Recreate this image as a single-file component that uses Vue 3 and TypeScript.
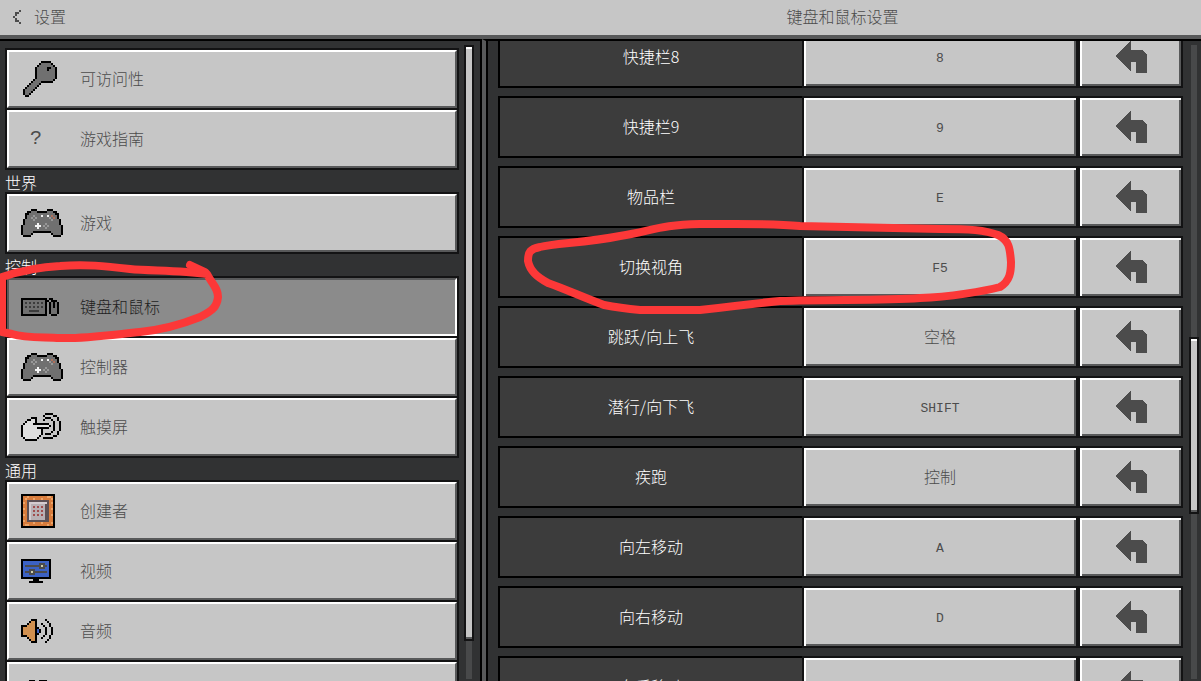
<script setup lang="ts">
import { ref } from 'vue'

interface Entry {
  id: string
  label: string
  icon: string
}
interface Group {
  title: string
  entries: Entry[]
}
interface Binding {
  action: string
  key: string
}

const palette: Record<string, string> = {
  K: '#000000',
  g: '#707070',
  s: '#989898',
  w: '#f4f4f4',
  o: '#b0705c',
  d: '#3c3c3c',
  h: '#dedede',
  c: '#d87c3c',
  l: '#eca468',
  e: '#5c5054',
  p: '#b8b0b4',
  q: '#d4ccd0',
  r: '#a04c4c',
  u: '#3c62c4',
  n: '#4c4c4c',
  y: '#d0d0b0',
  b: '#d09050',
}

const icons: Record<string, string[]> = {
  key: [
    '..........KKKKK...',
    '.........KgggggK..',
    '........KgggggggK.',
    '.......KgggggKKggK',
    '.......KgggggKgggK',
    '.......KgggggggggK',
    '.......KgggggggggK',
    '.......KgggggggggK',
    '.......KgggggggggK',
    '......KgggggggggK.',
    '.....KggggKKKKKK..',
    '....KggggK........',
    '...KggggK.........',
    '..KggggK..........',
    '.KggggK...........',
    '.KgggK............',
    '.KggK.............',
    '..KK..............',
  ],
  gamepad: [
    '.....KKK.....KKK.....',
    '...KKgggKKKKKgggKK...',
    '..KKgggggggggggggKK..',
    '..KgggsgggwggwgoggK..',
    '..KggsgsggggggsgogK..',
    '.KggggsggggggggsgggK.',
    '.KgggggggggggggggggK.',
    '.KggggggwgggsggggggK.',
    'KggggggwwwgsgsggggggK',
    'KgggggggwgggsgggggggK',
    'KgggggggggggggggggggK',
    'KgggggKKKKKKKKKgggggK',
    'KggggK.........KggggK',
    '.KKKK...........KKKK.',
  ],
  keyboard: [
    'KKKKKKKKKKKKK.KK...',
    'KgggggggggggKK.KKK.',
    'KgdgdgdgdgdgK.KgKgK',
    'KgggggggggggK.KgKgK',
    'KgdgdgdgdgdgK.KgKgK',
    'KgggggggggggK.KgggK',
    'KgggdddddgggK.KgggK',
    'KgggggggggggK.KgggK',
    'KKKKKKKKKKKKK..KKK.',
  ],
  touch: [
    '............KKKK....',
    '...........K....KK..',
    '.....KKK....KKK...K.',
    '...KKhhK...K...K..K.',
    '..KhhhhK........K..K',
    '.KhhhhKKKKKKKK..K..K',
    'KhhhhhhhhhhhhhK.K..K',
    'KhhhhhhhKKKKKK..K..K',
    'KhhhhhhhhhK.....K..K',
    'KhhhhhhhhhK....K..K.',
    'KhhhhhhhhhK.KKK...K.',
    'KhhhhhhhhK......KK..',
    '.KhhhhhhK..KKKKK....',
    '..KKKKKK............',
  ],
  creator: [
    'KKKKKKKKKKKKKKKKK',
    'KcclcccccccccllcK',
    'KclccclccclcccclK',
    'KcceeeeeeeeeeeccK',
    'KlceqqqqqqqqqeclK',
    'KcceqpppppppeeccK',
    'KcceqprprprpeeccK',
    'KlceqpppppppeeclK',
    'KcceqprprprpeeccK',
    'KcceqpppppppeeccK',
    'KlceqprprprpeeclK',
    'KcceqpppppppeeccK',
    'KcceqpppppppeeccK',
    'KlceeeeeeeeeeeccK',
    'KccccclccclcccclK',
    'KcllccccccccclccK',
    'KKKKKKKKKKKKKKKKK',
  ],
  video: [
    'KKKKKKKKKKKKKKK',
    'KuuuuuuuuuuuuuK',
    'KuuuuuuuunnnuuK',
    'KunnnnnnnnynnuK',
    'KuuuuuuuunnnuuK',
    'KuuunnnuuuuuuuK',
    'KunnnynnnnnnnuK',
    'KuuunnnuuuuuuuK',
    'KuuuuuuuuuuuuuK',
    'KKKKKKKKKKKKKKK',
    '......KKK......',
    '....KKKKKKK....',
  ],
  audio: [
    '.....KKK....K...',
    '....KbbK.....K..',
    '...KbbbK..K...K.',
    'KKKbbbbK...K..K.',
    'KbbbbbbKK...K..K',
    'KbbbbbbKuK..K..K',
    'KbbbbbbKuK..K..K',
    'KbbbbbbKK...K..K',
    'KKKbbbbK...K..K.',
    '...KbbbK..K...K.',
    '....KbbK.....K..',
    '.....KKK....K...',
  ],
  language: [
    '....KKK..KKKK...',
    '...KhhhKKhhhhK..',
    '..KhhhhhhhhhhK..',
    '.KhhhhhhhhhhhhK.',
    '.KhhhhhhhhhhhhK.',
    '.KhhhhhhhhhhhhK.',
    '.KhhhhhhhhhhhhK.',
    '.KhhhhhhhhhhhhK.',
    '..KhhhhhhhhhhK..',
    '...KKKKKKKKKK...',
    '................',
  ],
  back: ['...n', '.nn.', '.n..', 'n...', '.n..', '.nn.', '...n'],
}

interface Pixel {
  x: number
  y: number
  w: number
  fill: string
}

function pixels(name: string): Pixel[] {
  const out: Pixel[] = []
  icons[name].forEach((row, y) => {
    let x = 0
    while (x < row.length) {
      let w = 1
      while (row[x + w] === row[x]) w++
      if (row[x] !== '.') out.push({ x, y, w, fill: palette[row[x]] })
      x += w
    }
  })
  return out
}
const cols = (name: string) => Math.max(...icons[name].map((r) => r.length))
const rows = (name: string) => icons[name].length
const isLatin = (text: string) => /^[\x20-\x7e]+$/.test(text)

const groups: Group[] = [
  {
    title: '',
    entries: [
      { id: 'access', label: '可访问性', icon: 'key' },
      { id: 'guide', label: '游戏指南', icon: '' },
    ],
  },
  { title: '世界', entries: [{ id: 'game', label: '游戏', icon: 'gamepad' }] },
  {
    title: '控制',
    entries: [
      { id: 'keyboard', label: '键盘和鼠标', icon: 'keyboard' },
      { id: 'controller', label: '控制器', icon: 'gamepad' },
      { id: 'touch', label: '触摸屏', icon: 'touch' },
    ],
  },
  {
    title: '通用',
    entries: [
      { id: 'creator', label: '创建者', icon: 'creator' },
      { id: 'video', label: '视频', icon: 'video' },
      { id: 'audio', label: '音频', icon: 'audio' },
      { id: 'more', label: '', icon: 'language' },
    ],
  },
]

const bindings: Binding[] = [
  { action: '快捷栏8', key: '8' },
  { action: '快捷栏9', key: '9' },
  { action: '物品栏', key: 'E' },
  { action: '切换视角', key: 'F5' },
  { action: '跳跃/向上飞', key: '空格' },
  { action: '潜行/向下飞', key: 'SHIFT' },
  { action: '疾跑', key: '控制' },
  { action: '向左移动', key: 'A' },
  { action: '向右移动', key: 'D' },
  { action: '向后移动', key: '' },
]

const selected = ref('keyboard')
</script>

<template>
  <div class="screen">
    <header class="topbar">
      <button class="back" type="button">
        <svg class="px" :width="cols('back') * 2" :height="rows('back') * 2" :viewBox="`0 0 ${cols('back')} ${rows('back')}`" aria-hidden="true">
          <rect v-for="(p, i) in pixels('back')" :key="i" :x="p.x" :y="p.y" :width="p.w" height="1" :fill="p.fill" />
        </svg>
        <span class="text">设置</span>
      </button>
      <h1 class="title text">键盘和鼠标设置</h1>
    </header>

    <div class="panels">
      <div class="side">
        <nav class="menu">
          <section v-for="g in groups" :key="g.title" class="group">
            <h2 v-if="g.title" class="group-title">{{ g.title }}</h2>
            <div class="stack">
              <button
                v-for="e in g.entries"
                :key="e.id"
                type="button"
                class="entry"
                :class="{ active: selected === e.id }"
                @click="selected = e.id"
              >
                <span class="slot">
                  <svg v-if="e.icon" class="px" :width="cols(e.icon) * 2" :height="rows(e.icon) * 2" :viewBox="`0 0 ${cols(e.icon)} ${rows(e.icon)}`" aria-hidden="true">
                    <rect v-for="(p, i) in pixels(e.icon)" :key="i" :x="p.x" :y="p.y" :width="p.w" height="1" :fill="p.fill" />
                  </svg>
                  <span v-else class="question">?</span>
                </span>
                <span class="text">{{ e.label }}</span>
              </button>
            </div>
          </section>
        </nav>
        <div class="track"><div class="thumb side-thumb"></div></div>
      </div>

      <main class="content">
        <div class="bindings">
          <div v-for="b in bindings" :key="b.action" class="row">
            <div class="action"><span class="text">{{ b.action }}</span></div>
            <button type="button" class="key" :aria-label="`${b.action} ${b.key}`">
              <span :class="isLatin(b.key) ? 'latin' : 'text'">{{ b.key }}</span>
            </button>
            <button type="button" class="reset" :aria-label="`重置 ${b.action}`">
              <svg class="px" width="32" height="32" viewBox="0 0 32 32" aria-hidden="true">
                <path fill="#4c4c4c" d="M16 0V9H27L32 14V32H21V21H16V30L0 15Z" />
              </svg>
            </button>
          </div>
        </div>
        <div class="track"><div class="thumb content-thumb"></div></div>
      </main>
    </div>

    <svg class="marks" width="1201" height="681" viewBox="0 0 1201 681" aria-hidden="true">
      <path d="M2 277C20 271 38 267 60 266C85 264 105 266 130 269C150 271 180 270 207 274C212 284 218 288 218 297C217 307 212 311 200 317C180 325 160 330 140 332C110 335 80 339 60 338C40 337 25 338 12 334L2 332Z" />
      <path d="M190 265L205 272" />
      <path d="M700 224C660 225 655 230 620 236C585 243 555 243 540 247C530 249 528 252 528 261C530 271 537 277 548 283C565 289 585 298 604 305C620 308 630 309 640 310H700C725 307 750 304 780 301C830 299 880 301 920 298C950 297 985 291 1000 287C1010 281 1011 272 1011 262C1010 248 1009 240 998 235C985 230 970 229 940 229C900 228 850 227 800 226C770 223 740 224 700 224Z" />
    </svg>
  </div>
</template>

<style>
html,
body {
  background: #313233;
}
</style>

<style scoped>
.screen {
  position: relative;
  display: flex;
  flex-direction: column;
  height: 100vh;
  overflow: hidden;
  background: #313233;
  color: #4c4c4c;
  font-family: 'Noto Sans CJK SC', sans-serif;
  font-size: 16px;
  font-weight: 300;
  line-height: 22px;
}
.screen,
.screen * {
  box-sizing: border-box;
}
button {
  margin: 0;
  padding: 0;
  border: 0;
  border-radius: 0;
  background: none;
  color: inherit;
  font: inherit;
  cursor: pointer;
}
.px {
  display: block;
  shape-rendering: crispEdges;
}
.text {
  padding-bottom: 2px;
}
.topbar {
  display: grid;
  grid-template-columns: 484fr 717fr;
  flex: none;
  align-items: center;
  height: 39px;
  padding-bottom: 2px;
  background: #c6c6c6;
  border-bottom: 4px solid #58595a;
}
.back {
  display: flex;
  align-items: center;
  gap: 13px;
  padding-left: 13px;
}
.title {
  margin: 0;
  font-size: 16px;
  font-weight: 300;
  text-align: center;
}
.panels {
  display: grid;
  grid-template-columns: 482fr 719fr;
  flex: 1;
  min-height: 0;
}
.side {
  display: flex;
  gap: 5px;
  min-width: 0;
  min-height: 0;
  padding: 0 6px 0 5px;
  border-top: 2px solid #000;
  border-right: 2px solid #000;
}
.menu {
  flex: 1;
  min-width: 0;
  padding-top: 7px;
  overflow: hidden;
}
.group-title {
  height: 22px;
  margin: 0;
  color: #fff;
  font-size: 16px;
  font-weight: 300;
  line-height: 24px;
}
.stack {
  display: grid;
  gap: 2px;
  padding: 2px;
  background: #131314;
}
.entry {
  display: flex;
  align-items: center;
  height: 58px;
  padding-left: 12px;
  border: 2px solid;
  border-color: #fff #58595a #58595a #fff;
  background: #c6c6c6;
  text-align: left;
}
.entry.active {
  border-color: #58595a #fff #fff #58595a;
  background: #8b8b8b;
  color: #1e1e1e;
}
.slot {
  display: flex;
  flex: none;
  align-items: center;
  width: 59px;
}
.question {
  width: 30px;
  font-family: 'Liberation Mono', monospace;
  font-size: 20px;
  text-align: center;
}
.track {
  position: relative;
  flex: none;
  width: 10px;
  margin: 4px 0 2px;
  background: linear-gradient(#48494a, #48494a) center / 6px 100% no-repeat;
}
.thumb {
  position: absolute;
  left: 0;
  width: 10px;
  border: 2px solid #131314;
  background: #c6c6c6;
  box-shadow: inset 0 2px #fff, inset 0 -2px #58595a;
}
.side-thumb {
  top: 0;
  height: 94%;
}
.content-thumb {
  top: 46%;
  height: 28%;
}
.content {
  display: flex;
  gap: 6px;
  min-width: 0;
  min-height: 0;
  padding: 0 2px 0 12px;
  border-top: 2px solid #000;
  border-left: 4px solid #58595a;
  box-shadow: inset 2px 0 #000;
}
.bindings {
  flex: 1;
  min-width: 0;
  overflow: hidden;
}
.row {
  display: grid;
  grid-template-columns: 304fr 276fr 105fr;
  height: 62px;
  margin-bottom: 8px;
}
.row:first-child {
  margin-top: -15px;
}
.action {
  display: flex;
  align-items: center;
  justify-content: center;
  border: 2px solid #000;
  border-right: 0;
  background: #3c3c3c;
  color: #fff;
}
.key,
.reset {
  display: flex;
  align-items: center;
  justify-content: center;
  min-width: 0;
  border: 2px solid #131314;
  background: #c6c6c6;
  box-shadow: inset 2px 2px #fff, inset -2px -2px #58595a;
}
.latin {
  padding-top: 4px;
  font-family: 'Liberation Mono', monospace;
  font-size: 13px;
}
.marks {
  position: absolute;
  top: 0;
  left: 0;
  fill: none;
  stroke: #fc3838;
  stroke-width: 8px;
  stroke-linecap: round;
  stroke-linejoin: round;
  pointer-events: none;
}
</style>
